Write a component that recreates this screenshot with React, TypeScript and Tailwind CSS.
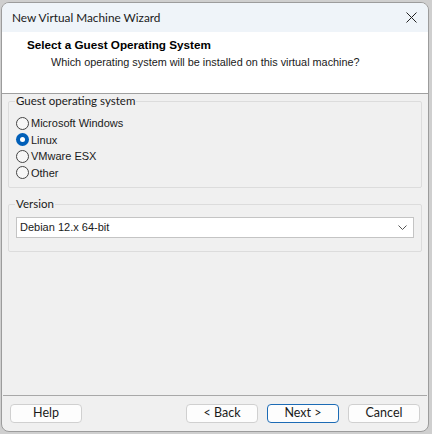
import { useState } from "react";

const ui = "font-['Segoe_UI','Lato','Noto_Sans',sans-serif]";
const tahoma = "font-['Tahoma','Liberation_Sans','Arial',sans-serif]";

const options = ["Microsoft Windows", "Linux", "VMware ESX", "Other"];

function Radio({ checked }: { checked: boolean }) {
  if (checked) {
    return (
      <span className="flex h-[13px] w-[13px] items-center justify-center rounded-full bg-[#005fb8]">
        <span className="h-[5px] w-[5px] rounded-full bg-white" />
      </span>
    );
  }
  return <span className="h-[13px] w-[13px] rounded-full border border-[#444] bg-[#f7f7f7]" />;
}

function Button({ label, primary }: { label: string; primary?: boolean }) {
  return (
    <button
      className={`h-[19px] w-[72px] rounded-[4px] border bg-[#fdfdfd] text-[12.5px] leading-none text-[#1a1a1a] ${ui} ${
        primary ? "border-[#1c6bb5]" : "border-[#d0d0d0]"
      }`}
    >
      {label}
    </button>
  );
}

export default function App() {
  const [os, setOs] = useState("Linux");

  return (
    <div className="h-[434px] w-[432px] bg-[#cfcfcf] pb-[2px] pl-[1px] pr-[3px] pt-[2px]">
      <div className="flex h-full flex-col overflow-hidden rounded-[8px] border border-[#9c9c9c] bg-[#f0f0f0]">
        {/* title bar */}
        <div className="flex h-[29px] items-center justify-between bg-[#eff4f9] pl-[10px] pr-[10px]">
          <span className={`text-[11.8px] text-[#1a1a1a] ${ui}`}>New Virtual Machine Wizard</span>
          <svg width="11" height="11" viewBox="0 0 11 11" className="mr-[1px]">
            <path d="M0.5 0.5L10.5 10.5M10.5 0.5L0.5 10.5" stroke="#222" strokeWidth="1" />
          </svg>
        </div>

        {/* header */}
        <div className={`h-[62px] border-b border-[#a0a0a0] bg-white ${tahoma}`}>
          <div className="pl-[25px] pt-[6px] text-[11.7px] font-bold leading-[14px] text-black">
            Select a Guest Operating System
          </div>
          <div className="pl-[49px] pt-[3px] text-[10.85px] leading-[14px] text-[#1a1a1a]">
            Which operating system will be installed on this virtual machine?
          </div>
        </div>

        {/* body */}
        <div className="flex-1 px-[6px] pt-0">
          <fieldset className="h-[94px] rounded-[2px] border border-[#dcdcdc] px-[7px]">
            <legend className={`ml-[-1px] px-[1px] text-[11.5px] leading-[14px] text-[#1a1a1a] ${ui}`}>
              Guest operating system
            </legend>
            <div className="pt-[7px]">
              {options.map((o) => (
                <label
                  key={o}
                  onClick={() => setOs(o)}
                  className={`flex h-[16.5px] cursor-default items-center gap-[2px] text-[11px] text-[#1a1a1a] ${tahoma}`}
                >
                  <Radio checked={os === o} />
                  <span>{o}</span>
                </label>
              ))}
            </div>
          </fieldset>

          <fieldset className="mt-[9px] h-[55px] rounded-[2px] border border-[#dcdcdc] px-[7px]">
            <legend className={`ml-[-1px] px-[1px] text-[11.5px] leading-[14px] text-[#1a1a1a] ${ui}`}>
              Version
            </legend>
            <div className="mt-[6px] flex h-[21px] items-center justify-between border border-[#c4c4c4] bg-white pl-[3px] pr-[6px]">
              <span className={`text-[11px] text-[#1a1a1a] ${tahoma}`}>Debian 12.x 64-bit</span>
              <svg width="9" height="5" viewBox="0 0 9 5">
                <path d="M0.5 0.5L4.5 4.5L8.5 0.5" fill="none" stroke="#555" strokeWidth="1" />
              </svg>
            </div>
          </fieldset>
        </div>

        {/* footer */}
        <div className="mx-[1px] flex h-[36px] items-start justify-between border-t border-[#a8a8a8] px-[7px] pt-[8px]">
          <Button label="Help" />
          <div className="flex gap-[9px]">
            <Button label="< Back" />
            <Button label="Next >" primary />
            <Button label="Cancel" />
          </div>
        </div>
      </div>
    </div>
  );
}
